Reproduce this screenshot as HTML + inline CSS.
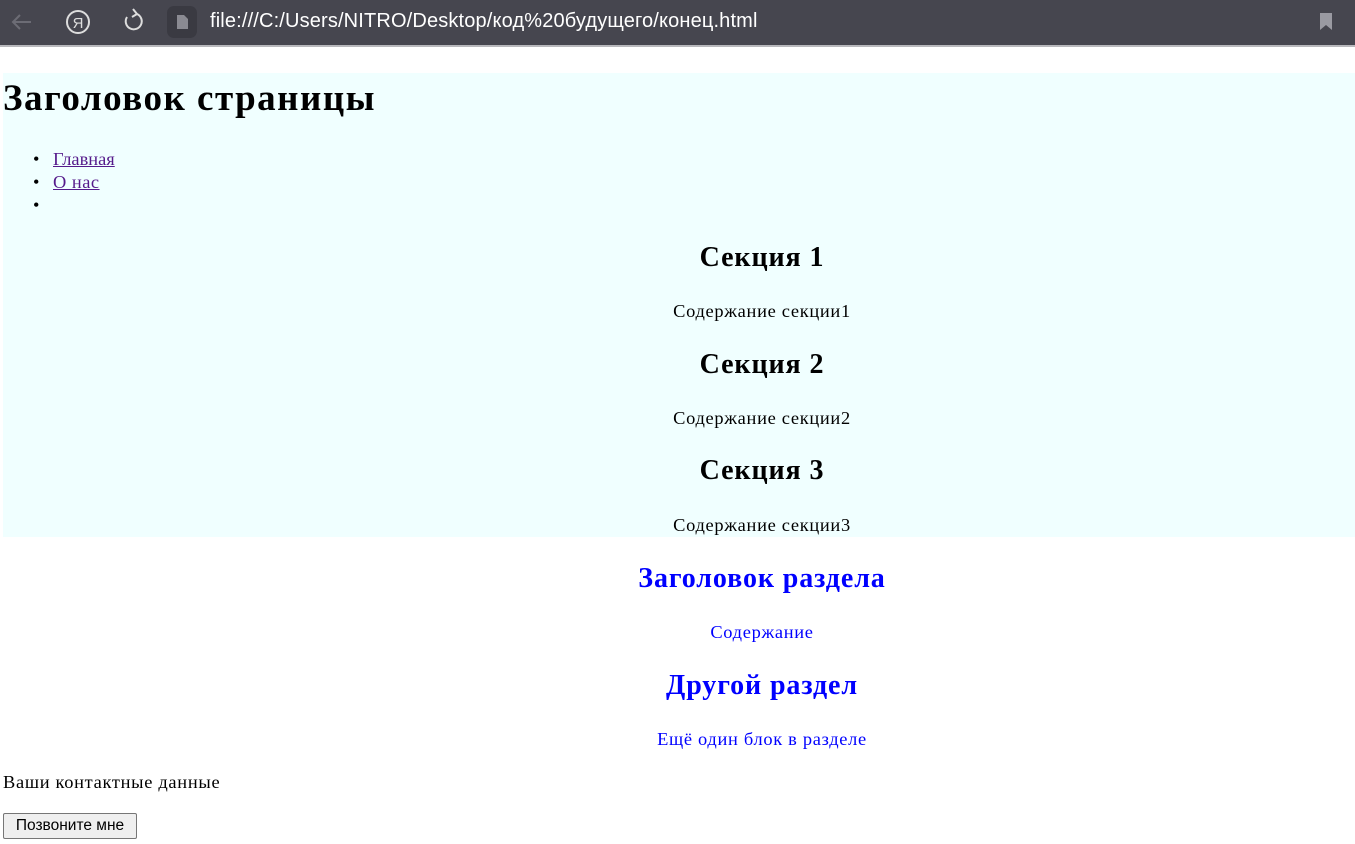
<!DOCTYPE html>
<html><head><meta charset="utf-8"><style>
html,body{margin:0;padding:0;width:1355px;height:844px;overflow:hidden;background:#fff;font-family:"Liberation Serif",serif;}
.bar{position:absolute;left:0;top:0;width:1355px;height:45px;background:#46464f;border-bottom:2px solid #b8b8bc;}
.url{position:absolute;left:210px;top:10px;font:20px "Liberation Sans","DejaVu Sans",sans-serif;color:#fff;white-space:nowrap;letter-spacing:0.15px;}
.ab{position:absolute;white-space:nowrap;}
.c{left:0;width:1524px;text-align:center;}
.h2{font-weight:bold;font-size:28px;letter-spacing:0.9px;}
.p{font-size:18.4px;letter-spacing:0.7px;}
.blue{color:#0000ff;}
a{color:#551a8b;}
</style></head><body>
<div class="bar">
<svg width="1355" height="45" style="position:absolute;left:0;top:0">
<path d="M31 22H13M20 15l-7 7 7 7" stroke="#6c6c75" stroke-width="2" fill="none"/>
<circle cx="78" cy="22" r="11" stroke="#ddd" stroke-width="2" fill="none"/>
<text x="78" y="28" font-family="Liberation Sans" font-size="15" fill="#ddd" text-anchor="middle">Я</text>
<path d="M137 14 A8 8 0 1 1 127 17" stroke="#ddd" stroke-width="2" fill="none"/><path d="M133 9l4 5-5 3" stroke="#ddd" stroke-width="2" fill="none"/>
<rect x="167" y="6" width="30" height="32" rx="7" fill="#3a3a42"/>
<path d="M177 15h7l4 4v10h-11z" fill="#8a8a92"/>
<path d="M1320 13h12v17l-6-5-6 5z" fill="#9a9aa2"/>
</svg>
<div class="url">file:///C:/Users/NITRO/Desktop/код%20будущего/конец.html</div>
</div>
<div style="position:absolute;left:3px;top:73px;width:1352px;height:464px;background:#f0ffff"></div>
<div class="ab" style="left:3px;top:77px;font-size:37px;font-weight:bold;line-height:44px;letter-spacing:1.5px">Заголовок страницы</div>
<div class="ab" style="left:33px;top:148px;font-size:18.4px;line-height:23px">
<div>•<a href="#" style="position:absolute;left:20px">Главная</a></div><div>•<a href="#" style="position:absolute;left:20px;letter-spacing:0.5px">О нас</a></div><div>•</div></div>
<div class="ab c h2" style="top:241px;line-height:34px">Секция 1</div>
<div class="ab c p" style="top:300px;line-height:22px">Содержание секции1</div>
<div class="ab c h2" style="top:348px;line-height:34px">Секция 2</div>
<div class="ab c p" style="top:407px;line-height:22px">Содержание секции2</div>
<div class="ab c h2" style="top:454px;line-height:34px">Секция 3</div>
<div class="ab c p" style="top:514px;line-height:22px">Содержание секции3</div>
<div class="ab c h2 blue" style="top:562px;line-height:34px">Заголовок раздела</div>
<div class="ab c p blue" style="top:621px;line-height:22px">Содержание</div>
<div class="ab c h2 blue" style="top:669px;line-height:34px">Другой раздел</div>
<div class="ab c p blue" style="top:728px;line-height:22px">Ещё один блок в разделе</div>
<div class="ab p" style="left:3px;top:771px;line-height:22px">Ваши контактные данные</div>
<div class="ab" style="left:3px;top:813px;width:132px;height:24px;border:1px solid #767676;border-radius:2px;background:#efefef;font:15.5px 'Liberation Sans',sans-serif;line-height:24px;text-align:center">Позвоните мне</div>
</body></html>
